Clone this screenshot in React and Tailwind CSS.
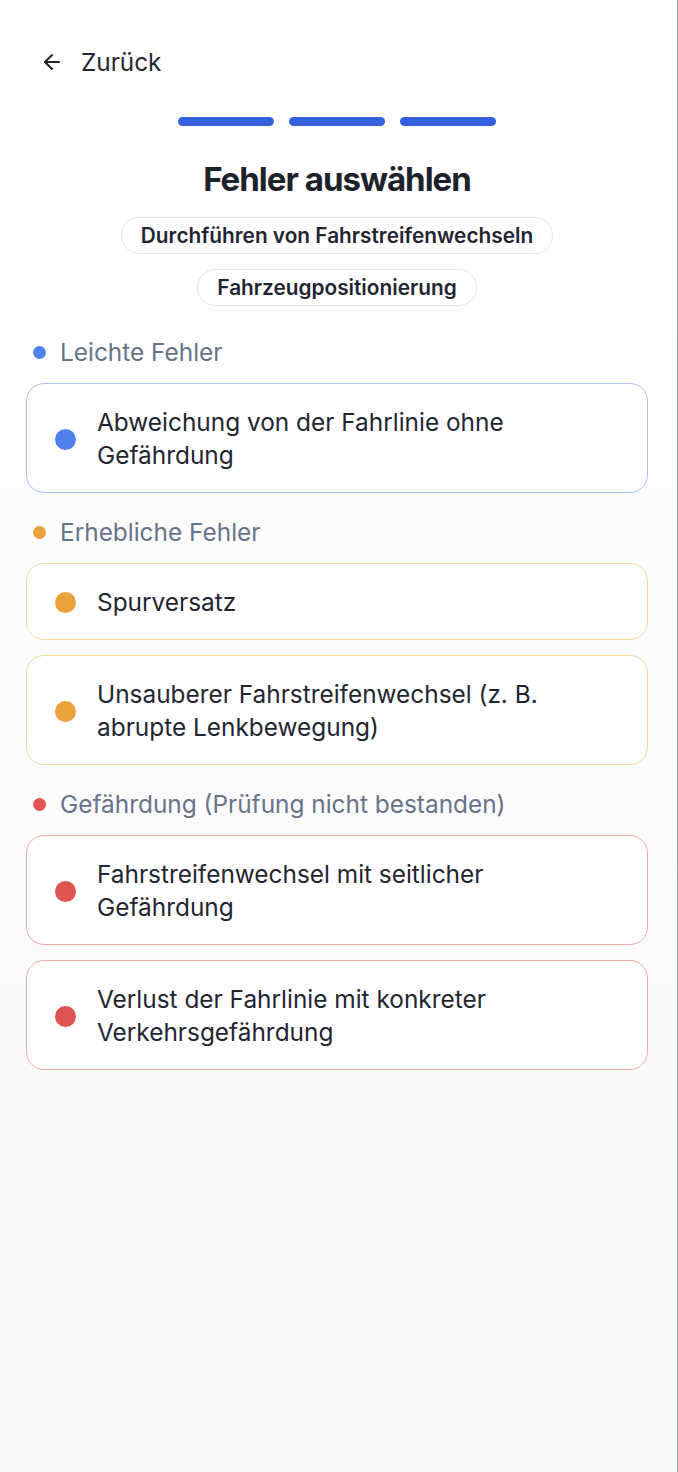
import React from "react";

const sections = [
  {
    title: "Leichte Fehler",
    dot: "bg-[#4f80ec]",
    border: "border-[#a8c1f5]",
    items: ["Abweichung von der Fahrlinie ohne Gefährdung"],
  },
  {
    title: "Erhebliche Fehler",
    dot: "bg-[#eaa23c]",
    border: "border-[#f6d59f]",
    items: ["Spurversatz", "Unsauberer Fahrstreifenwechsel (z. B. abrupte Lenkbewegung)"],
  },
  {
    title: "Gefährdung (Prüfung nicht bestanden)",
    dot: "bg-[#e05350]",
    border: "border-[#f2aaa8]",
    items: [
      "Fahrstreifenwechsel mit seitlicher Gefährdung",
      "Verlust der Fahrlinie mit konkreter Verkehrsgefährdung",
    ],
  },
];

export default function App() {
  return (
    <div
      className="min-h-screen w-full bg-gradient-to-b from-white to-[#f9f9f9] border-r border-[#96a09b] text-[#1f2632]"
      style={{ fontFamily: "Inter, 'Noto Sans', sans-serif" }}
    >
      <div className="pl-[26px] pr-[29px] pt-[45px] pb-10">
        <div className="flex items-center gap-[17px] pl-[14px] h-[34px]">
          <svg width="24" height="24" viewBox="0 0 24 24" fill="none" stroke="#1f2632" strokeWidth="2" strokeLinecap="round" strokeLinejoin="round">
            <path d="M19 12H5" />
            <path d="M12 19l-7-7 7-7" />
          </svg>
          <span className="text-[24.3px] leading-none">Zurück</span>
        </div>

        <div className="mt-[38px] flex justify-center gap-[15px]">
          <div className="h-[9px] w-[96px] rounded-full bg-[#3561de]" />
          <div className="h-[9px] w-[96px] rounded-full bg-[#3561de]" />
          <div className="h-[9px] w-[96px] rounded-full bg-[#3561de]" />
        </div>

        <h1 className="mt-[33px] text-center text-[33px] leading-[40px] font-bold tracking-[-0.03em] text-[#1c222c]">
          Fehler auswählen
        </h1>

        <div className="mt-[18px] flex flex-col items-center gap-[15px]">
          <span className="h-[37px] flex items-center rounded-full border border-[#e3e5e8] bg-white px-[19px] text-[20.8px] font-semibold text-[#1f2632]">
            Durchführen von Fahrstreifenwechseln
          </span>
          <span className="h-[37px] flex items-center rounded-full border border-[#e3e5e8] bg-white px-[19px] text-[20.8px] font-semibold text-[#1f2632]">
            Fahrzeugpositionierung
          </span>
        </div>

        <div className="mt-[32px] flex flex-col gap-[25px]">
          {sections.map((s) => (
            <div key={s.title} className="flex flex-col">
              <div className="flex items-center gap-[14px] pl-[7px] h-[28px]">
                <span className={`h-[13px] w-[13px] rounded-full ${s.dot}`} />
                <span className="text-[24.4px] leading-[28px] text-[#66738a]">{s.title}</span>
              </div>
              <div className="mt-[17px] flex flex-col gap-[15px]">
                {s.items.map((it) => (
                  <div
                    key={it}
                    className={`flex items-center gap-[21px] rounded-[18px] border ${s.border} bg-white px-[28px] pt-[22px] pb-[20px]`}
                  >
                    <span className={`h-[21px] w-[21px] shrink-0 rounded-full ${s.dot}`} />
                    <span className="text-[24.4px] leading-[33px] text-[#1f2632] pr-[20px]">{it}</span>
                  </div>
                ))}
              </div>
            </div>
          ))}
        </div>
      </div>
    </div>
  );
}
